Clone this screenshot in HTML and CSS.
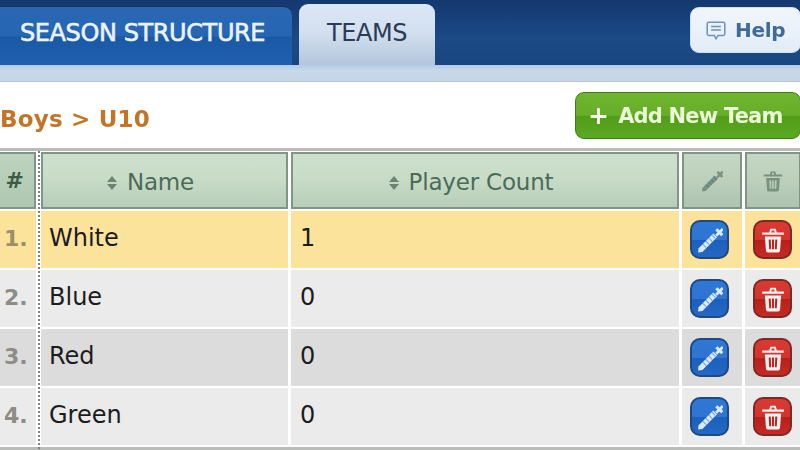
FILE: index.html
```html
<!DOCTYPE html>
<html lang="en">
<head>
<meta charset="utf-8">
<title>Teams</title>
<link rel="stylesheet" href="styles.css">
</head>
<body>
<svg class="defs" width="0" height="0" aria-hidden="true">
  <symbol id="pencil" viewBox="0 0 24 24">
    <path d="M1.500 19.500 L15 6 L18.500 9.500 L5 23 L1 23.500 Z" fill="currentColor"/>
    <path d="M5 15.500l3.500 3.500M7.800 12.700l3.500 3.500M10.600 9.900l3.500 3.500M13.400 7.100l3.500 3.500" stroke="#2467c4" stroke-opacity=".55" stroke-width="1" fill="none"/>
    <path d="M19.500 .5h2.500v3h2.500v2.800h-2.500v3h-2.500v-3h-2.800v-2.800h2.800z" fill="currentColor" transform="rotate(45 20.700 4.900)"/>
  </symbol>
  <symbol id="trash" viewBox="0 0 24 24">
    <path d="M2 5h20v2.200H2zM8.500 5l1-3.500h5l1 3.500h-1.900l-.6-1.700h-2l-.6 1.700z" fill="currentColor"/>
    <path fill-rule="evenodd" d="M4.500 8.800h15l-1 13q-.1 1.700-1.700 1.700H7.200q-1.600 0-1.700-1.700zM8 11.500l.5 9h1.800l-.4-9zM11.100 11.500v9h1.800v-9zM14.100 11.500l-.4 9h1.800l.5-9z" fill="currentColor"/>
  </symbol>
</svg>
<div class="page">
  <header class="topbar">
    <nav class="tabs">
      <a class="tab tab-season">SEASON STRUCTURE</a>
      <a class="tab tab-teams">TEAMS</a>
    </nav>
    <button class="help">
      <svg class="help-icon" viewBox="0 0 20 20"><path d="M3.500 2h13q1.500 0 1.500 1.500v9q0 1.500-1.500 1.500H12l-2 3-1.500-3H3.500Q2 14 2 12.500v-9Q2 2 3.500 2z" fill="none" stroke="currentColor" stroke-width="1.400"/><path d="M5.500 6h9M5.500 9h9" stroke="currentColor" stroke-width="1.400"/></svg>
      <span>Help</span>
    </button>
  </header>
  <div class="band"></div>
  <section class="titlebar">
    <h1 class="crumb">Boys &gt; U10</h1>
    <button class="add"><span class="plus">+</span><span>Add New Team</span></button>
  </section>
  <div class="rule"></div>
  <section class="table">
    <div class="dots"></div>
    <div class="row head">
      <div class="th num">#</div>
      <div class="th"><i class="sort"></i>Name</div>
      <div class="th"><i class="sort"></i>Player Count</div>
      <div class="th tool"><svg class="tool-icon"><use href="#pencil"/></svg></div>
      <div class="th tool"><svg class="tool-icon"><use href="#trash"/></svg></div>
    </div>
    <div class="row sel">
      <div class="td num">1.</div><div class="td">White</div><div class="td">1</div>
      <div class="td act"><button class="btn edit"><svg><use href="#pencil"/></svg></button></div>
      <div class="td act"><button class="btn del"><svg><use href="#trash"/></svg></button></div>
    </div>
    <div class="row light">
      <div class="td num">2.</div><div class="td">Blue</div><div class="td">0</div>
      <div class="td act"><button class="btn edit"><svg><use href="#pencil"/></svg></button></div>
      <div class="td act"><button class="btn del"><svg><use href="#trash"/></svg></button></div>
    </div>
    <div class="row dark">
      <div class="td num">3.</div><div class="td">Red</div><div class="td">0</div>
      <div class="td act"><button class="btn edit"><svg><use href="#pencil"/></svg></button></div>
      <div class="td act"><button class="btn del"><svg><use href="#trash"/></svg></button></div>
    </div>
    <div class="row light">
      <div class="td num">4.</div><div class="td">Green</div><div class="td">0</div>
      <div class="td act"><button class="btn edit"><svg><use href="#pencil"/></svg></button></div>
      <div class="td act"><button class="btn del"><svg><use href="#trash"/></svg></button></div>
    </div>
  </section>
  <div class="rule bottom"></div>
</div>
</body>
</html>
```
FILE: styles.css
```css
html, body { margin: 0; padding: 0; width: 800px; height: 450px; overflow: hidden; background: #fff; }
body { font-family: "DejaVu Sans", Verdana, sans-serif; }
.defs { position: absolute; }
.page { width: 800px; height: 450px; overflow: hidden; filter: blur(.55px); }
button { font-family: inherit; padding: 0; cursor: pointer; }

.topbar { height: 65px; background: linear-gradient(#14386f, #1b4a85 60%, #184680); display: flex; justify-content: space-between; align-items: flex-start; }
.tabs { display: flex; gap: 7px; align-items: flex-end; height: 65px; }
.tab { display: flex; align-items: center; font-size: 24px; letter-spacing: -.4px; }
.tab-season { width: 292px; height: 59px; box-sizing: border-box; padding: 0 0 7px 20px; color: #eaf3fb; -webkit-text-stroke: .6px #eaf3fb; border-radius: 0 9px 0 0; background: linear-gradient(#2a67b3, #2566b2 50%, #1a59a6 52%, #1f5fae); border-top: 1px solid #123262; }
.tab-teams { width: 136px; height: 61px; box-sizing: border-box; padding-bottom: 3px; justify-content: center; color: #2c3a58; border-radius: 9px 9px 0 0; background: linear-gradient(#dbe7f5, #d3e0ef 45%, #b3c6dc); }
.help { width: 111px; height: 46px; margin-top: 7px; margin-right: -1px; border: 1px solid #cfe0f0; border-radius: 9px; background: linear-gradient(#f1f6fc, #e2ecf7); color: #3f6a99; display: flex; align-items: center; gap: 8px; padding-left: 14px; font-size: 20px; font-weight: 700; letter-spacing: -.3px; }
.help-icon { width: 22px; height: 22px; color: #6d94bb; margin-top: 2px; }

.band { height: 17px; background: linear-gradient(#b4cbe6, #c9d9ea 40%, #c5d5e6); border-bottom: 1px solid #b8c6d4; box-sizing: border-box; }
.titlebar { height: 66px; display: flex; justify-content: space-between; align-items: flex-start; }
.crumb { margin: 20px 0 0; font-size: 23px; line-height: 34px; font-weight: 700; color: #c47425; letter-spacing: .2px; }
.add { width: 226px; height: 47px; margin-top: 10px; margin-right: -1px; box-sizing: border-box; border: 1px solid #3f7d17; border-radius: 9px; background: linear-gradient(#6fb52f, #67ae28 50%, #529d17 52%, #5ba822); color: #ecf9d8; display: flex; align-items: center; padding-left: 12px; gap: 10px; font-size: 21px; font-weight: 700; letter-spacing: -.8px; }
.plus { font-size: 25px; line-height: 30px; font-weight: 700; color: #f4fbe9; margin-top: 1px; }

.rule { height: 3px; background: #b9bcb9; }
.rule.bottom { margin-top: 2px; }
.table { position: relative; padding-top: 1px; }
.dots { position: absolute; left: 38px; top: 0; bottom: -8px; width: 0; border-left: 2px dotted #7d827e; z-index: 1; }
.row { display: grid; grid-template-columns: 36px 249px 388px 60px 56px; column-gap: 3px; height: 57px; margin-bottom: 2px; }
.row > :nth-child(2) { margin-left: 2px; width: 247px; }

.th { box-sizing: border-box; border: 2px solid #7f9585; padding: 2px 28px 0 0; background: linear-gradient(#cce0cd, #c8dcc8 45%, #b8ceb9); color: #4b6b58; font-size: 23px; letter-spacing: -.2px; display: flex; align-items: center; justify-content: center; gap: 9px; }
.th.num { padding: 0 5px 0 0; border-left: 0; color: #3f5b47; font-weight: 700; font-size: 22px; background: linear-gradient(#bdd3be, #afc7b1); }
.th.tool { padding: 0; color: #7b9180; background: linear-gradient(#c3d7c3, #bcd0bc 50%, #aec4af); }
.sort { display: block; width: 11px; height: 16px; margin-top: 2px; position: relative; }
.sort::before, .sort::after { content: ""; position: absolute; left: 0; border-left: 5.500px solid transparent; border-right: 5.500px solid transparent; }
.sort::before { top: 1px; border-bottom: 6px solid #6c8474; }
.sort::after { bottom: 1px; border-top: 6px solid #6c8474; }
.tool-icon { width: 22px; height: 22px; }

.td { display: flex; align-items: center; box-sizing: border-box; padding: 0 0 3px 8px; font-size: 24px; color: #1c1c1c; }
.td:nth-child(3) { padding-left: 9px; }
.td.num { padding-left: 4px; font-size: 22px; font-weight: 700; color: #8d8d85; }
.td.act { padding: 0 0 0 8px; }
.sel .td { background: #fbe39c; }
.sel .td.num { color: #998f68; }
.light .td { background: #ebebeb; }
.dark .td { background: #dcdcdc; }
.btn { width: 39px; height: 39px; box-sizing: border-box; border-radius: 10px; display: flex; align-items: center; justify-content: center; color: #fff; }
.btn svg { width: 26px; height: 26px; }
.edit { border: 2px solid #1f4a80; background: linear-gradient(#2f78d6, #2f74d0 50%, #1c5fbc 52%, #2467c4); color: #d8ecff; }
.del { border: 2px solid #7c2a26; background: linear-gradient(#d93a33, #d2332d 50%, #b81f1b 52%, #c62a25); color: #fdf0ee; }
```
